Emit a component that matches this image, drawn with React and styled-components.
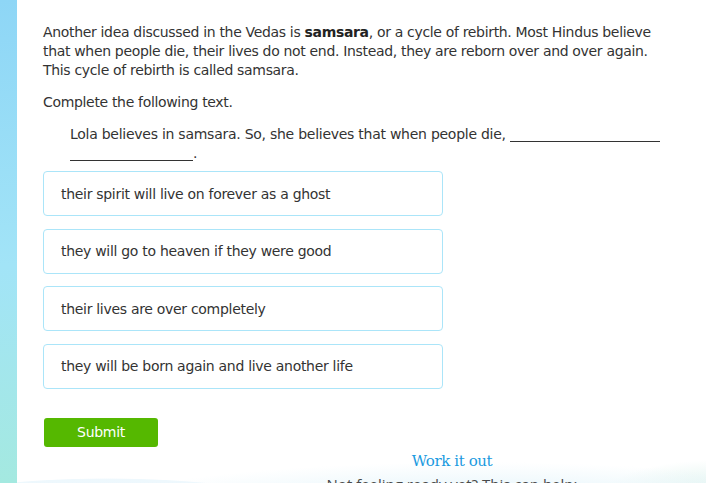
import React from 'react';
import styled, { createGlobalStyle } from 'styled-components';

const GlobalStyle = createGlobalStyle`
  html, body {
    margin: 0;
    padding: 0;
    background: #ffffff;
  }
  body {
    font-family: 'DejaVu Sans', Verdana, sans-serif;
    color: #333333;
  }
`;

const Page = styled.div`
  display: flex;
  width: 706px;
  height: 483px;
  overflow: hidden;
`;

const Stripe = styled.div`
  flex: 0 0 17px;
  background: linear-gradient(to bottom, #8ed6f6 0%, #a2e4f7 55%, #a4e9e0 100%);
`;

const Main = styled.div`
  flex: 1;
  display: flex;
  flex-direction: column;
  padding: 23px 0 0 26px;
  background:
    radial-gradient(ellipse 260px 40px at 90px 507px, #e8f6fc 0%, #eef8fd 70%, rgba(255, 255, 255, 0) 72%),
    radial-gradient(ellipse 420px 60px at 460px 522px, #e3f3fa 0%, #edf8fc 60%, rgba(255, 255, 255, 0) 100%),
    radial-gradient(ellipse 120px 40px at 700px 500px, #d4efe9 0%, rgba(255, 255, 255, 0) 100%),
    #ffffff;

  & > * {
    flex-shrink: 0;
  }
`;

const Paragraph = styled.p`
  margin: 0;
  font-size: 14px;
  line-height: 19px;
  letter-spacing: -0.33px;
  white-space: nowrap;

  & + & {
    margin-top: 13px;
  }

  b {
    color: #222;
  }
`;

const Prompt = styled.div`
  margin: 13px 0 0 27px;
  width: 600px;
  font-size: 14px;
  line-height: 19px;
  letter-spacing: -0.26px;
`;

const Blank = styled.span`
  display: inline-block;
  width: ${({ $w }) => $w}px;
  height: 14px;
  border-bottom: 1px solid #333;
  vertical-align: -3px;
`;

const Choices = styled.div`
  display: flex;
  flex-direction: column;
  gap: 12.5px;
  margin-top: 8px;
`;

const Choice = styled.div`
  box-sizing: border-box;
  width: 400px;
  height: 45px;
  display: flex;
  align-items: center;
  padding-left: 17px;
  border: 1px solid #abe5f9;
  border-radius: 4px;
  font-size: 14px;
  letter-spacing: -0.3px;
  color: #333;
  background: #fff;
`;

const SubmitButton = styled.button`
  margin: 29px 0 0 1px;
  width: 114px;
  height: 29px;
  border: none;
  border-radius: 3px;
  background: #55b800;
  color: #ffffff;
  font-family: 'DejaVu Sans', Verdana, sans-serif;
  font-size: 14px;
  letter-spacing: -0.3px;
  padding: 0;
  align-self: flex-start;
`;

const Footer = styled.div`
  display: flex;
  flex-direction: column;
  align-items: center;
  padding-left: 155px;
  margin-top: 4px;
`;

const WorkLink = styled.a`
  font-family: 'DejaVu Serif', 'Liberation Serif', serif;
  font-size: 15px;
  line-height: 20px;
  letter-spacing: -0.4px;
  color: #1a9ae0;
  text-decoration: none;
`;

const Help = styled.div`
  margin-top: 3px;
  font-family: 'Open Sans', 'DejaVu Sans', sans-serif;
  font-size: 15px;
  line-height: 20px;
  color: #4a4a4a;
`;

const options = [
  'their spirit will live on forever as a ghost',
  'they will go to heaven if they were good',
  'their lives are over completely',
  'they will be born again and live another life',
];

const App = () => {
  return (
    <>
      <GlobalStyle />
      <Page>
        <Stripe />
        <Main>
          <Paragraph>
            Another idea discussed in the Vedas is <b>samsara</b>, or a cycle of rebirth. Most Hindus believe
            <br />
            that when people die, their lives do not end. Instead, they are reborn over and over again.
            <br />
            This cycle of rebirth is called samsara.
          </Paragraph>
          <Paragraph>Complete the following text.</Paragraph>
          <Prompt>
            Lola believes in samsara. So, she believes that when people die, <Blank $w={150} />
            <br />
            <Blank $w={123} />.
          </Prompt>
          <Choices>
            {options.map((text) => (
              <Choice key={text}>{text}</Choice>
            ))}
          </Choices>
          <SubmitButton>Submit</SubmitButton>
          <Footer>
            <WorkLink href="#">Work it out</WorkLink>
            <Help>Not feeling ready yet? This can help:</Help>
          </Footer>
        </Main>
      </Page>
    </>
  );
};

export default App;
